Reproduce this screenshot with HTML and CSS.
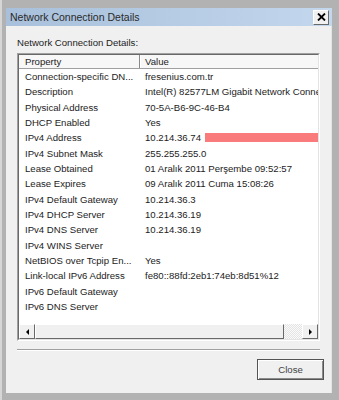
FILE: index.html
```html
<!DOCTYPE html>
<html lang="en">
<head>
<meta charset="UTF-8" />
  <title>Network Connection Details</title>
  <link rel="stylesheet" href="styles.css">
</head>
<body>
<div class="window">
  <div class="titlebar">
    <span class="title">Network Connection Details</span>
    <span class="close-x">
      <svg width="9" height="8" viewBox="0 0 9 8"><path d="M1 0.5 L8 7.5 M8 0.5 L1 7.5" stroke="#000" stroke-width="1.8"/></svg>
    </span>
  </div>

  <div class="dialog">
    <div class="label">Network Connection Details:</div>

    <div class="listbox">
      <div class="list-inner">
        <div class="list-header">
          <div class="col-prop">Property</div>
          <div class="col-val">Value</div>
        </div>

        <div class="list-rows">
          <div class="row"><div class="col-prop">Connection-specific DN...</div><div class="col-val">fresenius.com.tr</div></div>
          <div class="row"><div class="col-prop">Description</div><div class="col-val">Intel(R) 82577LM Gigabit Network Conne</div></div>
          <div class="row"><div class="col-prop">Physical Address</div><div class="col-val">70-5A-B6-9C-46-B4</div></div>
          <div class="row"><div class="col-prop">DHCP Enabled</div><div class="col-val">Yes</div></div>
          <div class="row"><div class="col-prop">IPv4 Address</div><div class="col-val">10.214.36.74<span class="redact"></span></div></div>
          <div class="row"><div class="col-prop">IPv4 Subnet Mask</div><div class="col-val">255.255.255.0</div></div>
          <div class="row"><div class="col-prop">Lease Obtained</div><div class="col-val">01 Aralık 2011 Perşembe 09:52:57</div></div>
          <div class="row"><div class="col-prop">Lease Expires</div><div class="col-val">09 Aralık 2011 Cuma 15:08:26</div></div>
          <div class="row"><div class="col-prop">IPv4 Default Gateway</div><div class="col-val">10.214.36.3</div></div>
          <div class="row"><div class="col-prop">IPv4 DHCP Server</div><div class="col-val">10.214.36.19</div></div>
          <div class="row"><div class="col-prop">IPv4 DNS Server</div><div class="col-val">10.214.36.19</div></div>
          <div class="row"><div class="col-prop">IPv4 WINS Server</div><div class="col-val"></div></div>
          <div class="row"><div class="col-prop">NetBIOS over Tcpip En...</div><div class="col-val">Yes</div></div>
          <div class="row"><div class="col-prop">Link-local IPv6 Address</div><div class="col-val">fe80::88fd:2eb1:74eb:8d51%12</div></div>
          <div class="row"><div class="col-prop">IPv6 Default Gateway</div><div class="col-val"></div></div>
          <div class="row"><div class="col-prop">IPv6 DNS Server</div><div class="col-val"></div></div>
        </div>

        <div class="hscroll">
          <div class="sb-btn"><span class="arrow-left"></span></div>
          <div class="sb-thumb"></div>
          <div class="sb-track"></div>
          <div class="sb-btn"><span class="arrow-right"></span></div>
        </div>
      </div>
    </div>

    <div class="separator"></div>

    <div class="buttons">
      <button class="btn">Close</button>
    </div>
  </div>
</div>
</body>
</html>
```

FILE: styles.css
```css
* {
  box-sizing: border-box;
}
body {
  margin: 0;
  font-family: 'Liberation Sans', Arial, sans-serif;
  color: #1c1c1c;
  background: #b4b4b4;
}
.window {
  width: 339px;
  height: 400px;
  background: #b2b2b2;
  border-left: 2px solid #d6d6d6;
  padding: 8px 7px 7px 4px;
  display: flex;
  flex-direction: column;
}
.titlebar {
  height: 18px;
  flex-shrink: 0;
  background: linear-gradient(to right, #a8c0db, #c3d7ed);
  display: flex;
  align-items: center;
  justify-content: space-between;
  padding: 0 3px 0 4px;
}
.title {
  font-size: 10.5px;
  color: #2a2a2a;
}
.close-x {
  width: 16px;
  height: 15px;
  background: #f0f0f0;
  border: 1px solid;
  border-color: #fff #696969 #696969 #fff;
  display: flex;
  align-items: center;
  justify-content: center;
}
.dialog {
  height: 367px;
  background: #f0f0f0;
  border-right: 1px solid #e4e4e4;
  padding: 11px 9px 0 11px;
}
.label {
  font-size: 9.6px;
  line-height: 12px;
  margin-bottom: 4px;
}
.listbox {
  height: 288px;
  margin-right: 2px;
  border: 1px solid;
  border-color: #a0a0a0 #fff #fff #a0a0a0;
}
.list-inner {
  height: 286px;
  border: 1px solid;
  border-color: #696969 #e3e3e3 #e3e3e3 #696969;
  background: #fff;
  overflow: hidden;
}
.list-header {
  height: 14px;
  display: flex;
  background: #f7f7f7;
  border-bottom: 1px solid #a0a0a0;
  font-size: 9.6px;
  line-height: 13px;
}
.list-header .col-prop {
  border-right: 1px solid #8a8a8a;
  box-shadow: 1px 0 0 #fff;
}
.col-prop {
  width: 121px;
  flex-shrink: 0;
  padding-left: 6px;
  white-space: nowrap;
  overflow: hidden;
}
.col-val {
  padding-left: 5px;
  white-space: nowrap;
  overflow: hidden;
  flex: 1;
}
.list-rows {
  height: 255px;
  font-size: 9.6px;
}
.row {
  display: flex;
  height: 15.35px;
  line-height: 15.35px;
}
.redact {
  display: inline-block;
  width: 140px;
  height: 9px;
  margin-left: 4px;
  vertical-align: -1px;
  background: #fa7b7b;
}
.hscroll {
  height: 15px;
  display: flex;
}
.sb-btn {
  width: 16px;
  height: 15px;
  background: #f0f0f0;
  border: 1px solid;
  border-color: #fff #696969 #696969 #fff;
  display: flex;
  align-items: center;
  justify-content: center;
}
.sb-thumb {
  width: 249px;
  height: 15px;
  background: #f0f0f0;
  border: 1px solid;
  border-color: #fff #696969 #696969 #fff;
}
.sb-track {
  flex: 1;
  height: 15px;
  background: repeating-conic-gradient(#e4e4e4 0 25%, #fafafa 0 50%) 0 0 / 2px 2px;
}
.arrow-left {
  width: 0;
  height: 0;
  border-top: 3px solid transparent;
  border-bottom: 3px solid transparent;
  border-right: 3px solid #000;
}
.arrow-right {
  width: 0;
  height: 0;
  border-top: 3px solid transparent;
  border-bottom: 3px solid transparent;
  border-left: 3px solid #000;
}
.separator {
  margin: 8px 2px 0 0;
  border-top: 1px solid #a0a0a0;
  border-bottom: 1px solid #fff;
}
.buttons {
  display: flex;
  justify-content: flex-end;
  margin-top: 8px;
}
.btn {
  width: 67px;
  height: 21px;
  margin-right: -2px;
  font-family: 'Liberation Sans', Arial, sans-serif;
  font-size: 9.6px;
  color: #444;
  background: #f0f0f0;
  border: 1px solid #555;
  box-shadow: inset 1px 1px #fff, inset -1px -1px #8a8a8a;
  padding: 0;
}
```
